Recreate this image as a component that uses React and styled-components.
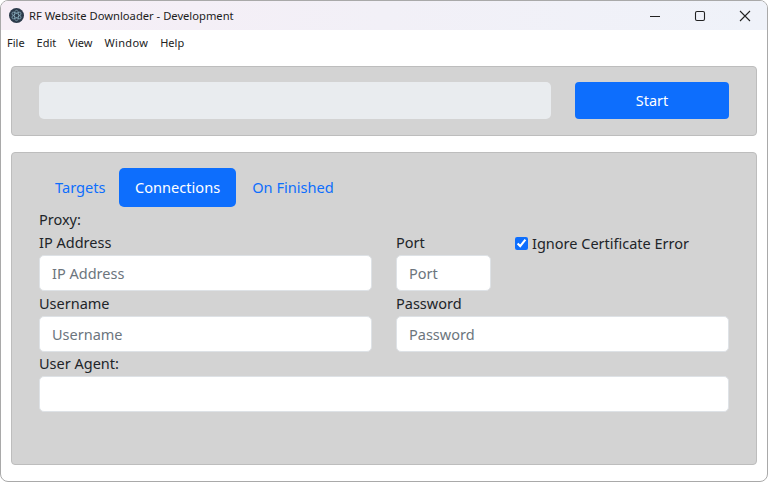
import React from "react";
import styled, { createGlobalStyle } from "styled-components";

const Global = createGlobalStyle`
  html, body { margin: 0; padding: 0; background: #fff; width: 768px; height: 482px; overflow: hidden; }
  #root { width: 768px; height: 482px; }
  * { box-sizing: border-box; }
`;
const Window = styled.div`
  width: 768px; height: 482px; background: #fff;
  border: 1px solid #a9a9a9; border-radius: 8px; overflow: hidden;
  display: flex; flex-direction: column;
  font-family: "Noto Sans", "Open Sans", sans-serif; color: #212529;
`;
const TitleBar = styled.div`
  height: 29px; flex: none; display: flex; align-items: center; padding-left: 8px;
  background: linear-gradient(90deg, #f6eef6 0%, #f2f0f7 50%, #eff2f9 100%);
`;
const Logo = styled.svg` width: 15px; height: 15px; flex: none; margin-right: 5px; `;
const Title = styled.div` font-size: 11.2px; color: #1c1c1c; flex: 1; `;
const WinBtn = styled.div`
  width: 45px; height: 29px; display: flex; align-items: center; justify-content: center;
  svg { width: 12px; height: 12px; }
`;
const MenuBar = styled.div`
  height: 26px; flex: none; display: flex; align-items: center; padding: 0 0 2px 6px; gap: 12px;
  font-size: 11px; color: #222;
`;
const MenuItem = styled.span`
  letter-spacing: ${p => (p.$wide ? "0.35px" : "0")};
`;
const Content = styled.div`
  flex: 1; padding: 10px 10px 16px; display: flex; flex-direction: column; gap: 16px;
`;
const Panel = styled.div`
  background: #d3d3d3; border: 1px solid #bdbdbd; border-radius: 4px;
`;
const TopPanel = styled(Panel)`
  height: 70px; flex: none; padding: 15px 27px; display: flex; gap: 24px;
`;
const Progress = styled.div`
  width: 512px; height: 37px; background: #e9ecef; border-radius: 5px;
`;
const StartButton = styled.div`
  width: 154px; height: 37px; padding-bottom: 1px; background: #0d6efd; border-radius: 4px; color: #fff;
  display: flex; align-items: center; justify-content: center; font-size: 14.4px;
`;
const MainPanel = styled(Panel)`
  flex: 1; padding: 15px 27px; display: flex; flex-direction: column;
`;
const Tabs = styled.div` display: flex; height: 39px; flex: none; `;
const Tab = styled.div`
  padding: 0 16px 2px; display: flex; align-items: center; font-size: 14.6px; border-radius: 5px;
  background: ${p => (p.$active ? "#0d6efd" : "transparent")};
  color: ${p => (p.$active ? "#fff" : "#0d6efd")};
`;
const TargetTab = styled(Tab)` width: 80px; `;
const Label = styled.div`
  font-size: 14.5px; line-height: 22px; height: 24px; white-space: nowrap;
`;
const ProxyLabel = styled(Label)` line-height: 24px; `;
const Grid = styled.div`
  display: grid; grid-template-columns: 333px 95px 214px; grid-template-rows: 61px 60px 60px; column-gap: 24px;
`;
const Field = styled.div`
  display: flex; flex-direction: column;
  grid-column: ${p => p.$span || "auto"};
`;
const Input = styled.input`
  width: 100%; height: 36px; border: 1px solid #dee2e6; border-radius: 5px; background: #fff;
  padding: 0 12px 1px; font: 14.5px "Noto Sans", "Open Sans", sans-serif; color: #212529; outline: none;
  &::placeholder { color: #6c757d; opacity: 1; }
`;
const CheckRow = styled.label`
  display: flex; align-items: center; height: 24px; gap: 4px; font-size: 14.5px; white-space: nowrap;
`;
const Check = styled.input` width: 13px; height: 13px; margin: 0; accent-color: #0d6efd; `;

export default function App() {
  return (
    <Window>
      <Global />
      <TitleBar>
        <Logo viewBox="0 0 16 16">
          <circle cx="8" cy="8" r="8" fill="#2b3a4a" />
          <g fill="none" stroke="#8fb4c4" strokeWidth="0.7">
            <ellipse cx="8" cy="8" rx="5.6" ry="2.2" transform="rotate(30 8 8)" />
            <ellipse cx="8" cy="8" rx="5.6" ry="2.2" transform="rotate(90 8 8)" />
            <ellipse cx="8" cy="8" rx="5.6" ry="2.2" transform="rotate(150 8 8)" />
          </g>
        </Logo>
        <Title>RF Website Downloader - Development</Title>
        <WinBtn>
          <svg viewBox="0 0 12 12"><path d="M1 6.5h10" stroke="#222" strokeWidth="1.1" /></svg>
        </WinBtn>
        <WinBtn>
          <svg viewBox="0 0 12 12"><rect x="1.5" y="1.5" width="9" height="9" rx="1.5" fill="none" stroke="#222" strokeWidth="1.1" /></svg>
        </WinBtn>
        <WinBtn>
          <svg viewBox="0 0 12 12"><path d="M1 1l10 10M11 1L1 11" stroke="#222" strokeWidth="1.1" /></svg>
        </WinBtn>
      </TitleBar>
      <MenuBar>
        <MenuItem>File</MenuItem>
        <MenuItem>Edit</MenuItem>
        <MenuItem>View</MenuItem>
        <MenuItem $wide>Window</MenuItem>
        <MenuItem>Help</MenuItem>
      </MenuBar>
      <Content>
        <TopPanel>
          <Progress />
          <StartButton>Start</StartButton>
        </TopPanel>
        <MainPanel>
          <Tabs>
            <TargetTab>Targets</TargetTab>
            <Tab $active>Connections</Tab>
            <Tab>On Finished</Tab>
          </Tabs>
          <ProxyLabel>Proxy:</ProxyLabel>
          <Grid>
            <Field>
              <Label>IP Address</Label>
              <Input placeholder="IP Address" />
            </Field>
            <Field>
              <Label>Port</Label>
              <Input placeholder="Port" />
            </Field>
            <CheckRow>
              <Check type="checkbox" defaultChecked />
              Ignore Certificate Error
            </CheckRow>
            <Field>
              <Label>Username</Label>
              <Input placeholder="Username" />
            </Field>
            <Field $span="2 / 4">
              <Label>Password</Label>
              <Input placeholder="Password" />
            </Field>
            <Field $span="1 / 4">
              <Label>User Agent:</Label>
              <Input />
            </Field>
          </Grid>
        </MainPanel>
      </Content>
    </Window>
  );
}
